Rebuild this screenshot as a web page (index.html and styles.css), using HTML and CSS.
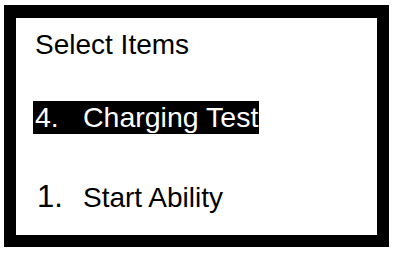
FILE: index.html
```html
<!DOCTYPE html>
<html>
<head>
<meta charset="utf-8">
<link rel="stylesheet" href="styles.css">
</head>
<body>
<div class="screen">
  <div class="title">Select Items</div>
  <div class="item selected"><span class="num">4.</span><span class="label">Charging Test</span></div>
  <div class="item"><span class="num big">1.</span><span class="label">Start Ability</span></div>
</div>
</body>
</html>
```
FILE: styles.css
```css
html, body {
  margin: 0;
  padding: 0;
  background: #fff;
}
body {
  font-family: "Liberation Sans", Arial, sans-serif;
  color: #000;
}
.screen {
  box-sizing: border-box;
  width: 385px;
  height: 242px;
  margin: 5px 0 0 4px;
  border: 12px solid #000;
  border-top-width: 13px;
  background: #fff;
  padding: 11px 0 0 19px;
  display: flex;
  flex-direction: column;
  align-items: flex-start;
}
.title {
  font-size: 28px;
  line-height: 32px;
}
.item {
  display: flex;
  align-items: baseline;
  font-size: 28.5px;
  line-height: 33px;
  height: 33px;
}
.item.selected {
  background: #000;
  color: #fff;
  margin-top: 40px;
  margin-left: -2px;
  padding: 0 1px 0 2px;
}
.item.selected + .item {
  margin-top: 46px;
  font-size: 28px;
}
.num {
  width: 48px;
}
.num.big {
  font-size: 31px;
  padding-left: 2px;
  width: 46px;
}
```
